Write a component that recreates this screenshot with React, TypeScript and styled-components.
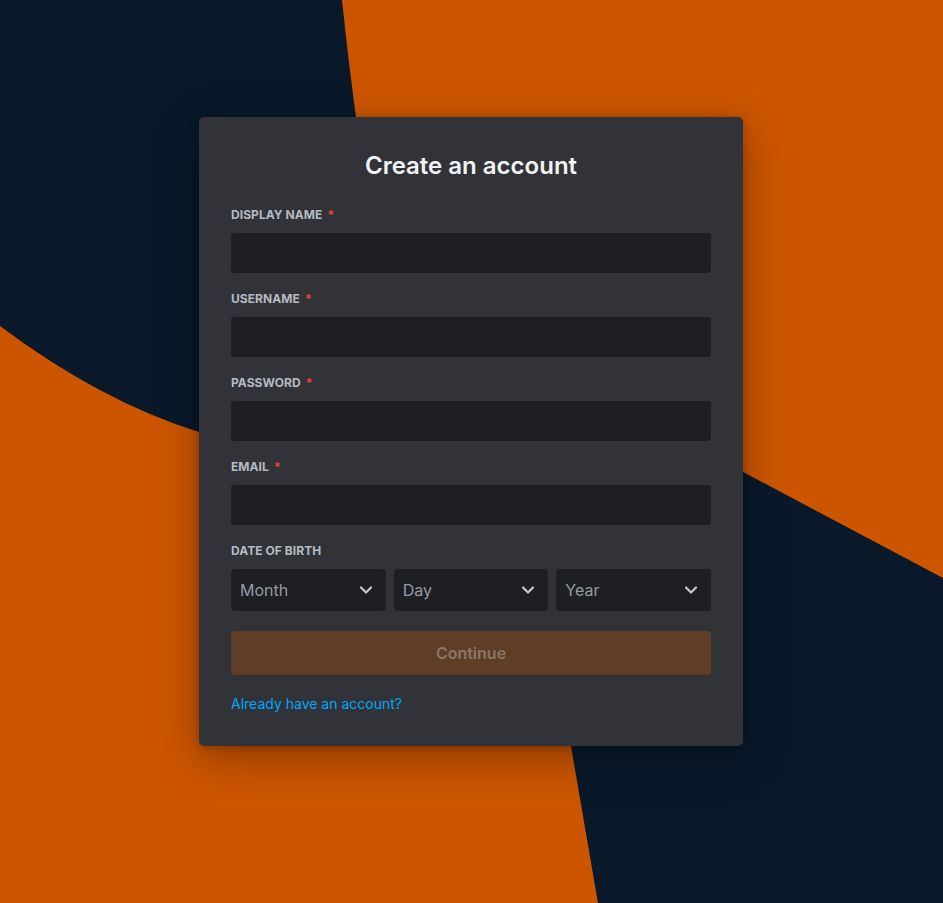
import React from "react";
import styled, { createGlobalStyle } from "styled-components";
import { ChevronDown } from "lucide-react";

const GlobalStyle = createGlobalStyle`
  html, body { margin: 0; padding: 0; }
  body {
    font-family: Inter, "Noto Sans", "Liberation Sans", sans-serif;
    background: #0a1a2a;
    -webkit-font-smoothing: antialiased;
  }
  * { box-sizing: border-box; }
`;

const Page = styled.main`
  position: relative;
  width: 100%;
  min-height: 903px;
  overflow: hidden;
  display: flex;
  justify-content: center;
  align-items: flex-start;
  padding: 117px 1px 0 0;
`;

const Backdrop = styled.svg`
  position: absolute;
  inset: 0;
  width: 100%;
  height: 100%;
  z-index: 0;
`;

const Card = styled.form`
  position: relative;
  z-index: 1;
  width: 544px;
  padding: 34px 32px 33px;
  background: #313338;
  border-radius: 5px;
  box-shadow: 0 2px 10px 0 rgba(0, 0, 0, 0.2), 0 12px 44px rgba(0, 0, 0, 0.3);
  display: flex;
  flex-direction: column;
`;

const Title = styled.h1`
  margin: 0 0 26px;
  font-size: 24px;
  line-height: 30px;
  font-weight: 600;
  color: #f2f3f5;
  text-align: center;
`;

const Field = styled.div`
  display: flex;
  flex-direction: column;
  margin-bottom: 18px;
`;

const Label = styled.label`
  display: block;
  margin-bottom: 10px;
  font-size: 12px;
  line-height: 16px;
  font-weight: 700;
  letter-spacing: 0.005em;
  text-transform: uppercase;
  color: #b5bac1;
`;

const Required = styled.span`
  color: #f23f42;
  padding-left: 5px;
`;

const TextInput = styled.input`
  height: 40px;
  width: 100%;
  border: none;
  outline: none;
  border-radius: 3px;
  background: #1e1f22;
  padding: 10px;
  font-size: 16px;
  color: #dbdee1;
  font-family: inherit;
`;

const DateRow = styled.div`
  display: grid;
  grid-template-columns: repeat(3, 1fr);
  gap: 8px;
`;

const Select = styled.div`
  height: 42px;
  border-radius: 4px;
  background: #1e1f22;
  display: flex;
  align-items: center;
  justify-content: space-between;
  padding: 0 10px 0 9px;
  font-size: 16px;
  color: #949ba4;
`;

const Chevron = styled(ChevronDown)`
  color: #c4c9ce;
  margin-top: -1px;
`;

const Button = styled.button`
  margin-top: 20px;
  height: 44px;
  width: 100%;
  border: none;
  border-radius: 4px;
  background: #5f3d27;
  color: #8b7566;
  font-family: inherit;
  font-size: 16px;
  font-weight: 600;
  cursor: not-allowed;
`;

const LoginLink = styled.a`
  margin-top: 20px;
  align-self: flex-start;
  font-size: 14px;
  line-height: 18px;
  color: #00a8fc;
  text-decoration: none;
  cursor: pointer;
`;

const fields = [
  { label: "Display Name", type: "text" },
  { label: "Username", type: "text" },
  { label: "Password", type: "password" },
  { label: "Email", type: "email" },
];

const dateParts = ["Month", "Day", "Year"];

export default function App() {
  return (
    <>
      <GlobalStyle />
      <Page>
        <Backdrop viewBox="0 0 943 903" preserveAspectRatio="none" aria-hidden="true">
          <rect x="0" y="0" width="943" height="903" fill="#09192a" />
          <path d="M342 0 Q348 58 357 125 L743 472 L943 578 L943 0 Z" fill="#cc5500" />
          <path d="M0 326 Q100 401 199 432 L571 746 Q584 822 598 903 L0 903 Z" fill="#cc5500" />
        </Backdrop>
        <Card onSubmit={(e) => e.preventDefault()}>
          <Title>Create an account</Title>
          {fields.map((f) => (
            <Field key={f.label}>
              <Label>
                {f.label}
                <Required>*</Required>
              </Label>
              <TextInput type={f.type} />
            </Field>
          ))}
          <div>
            <Label>Date of birth</Label>
            <DateRow>
              {dateParts.map((p) => (
                <Select key={p}>
                  <span>{p}</span>
                  <Chevron size={20} strokeWidth={2.6} />
                </Select>
              ))}
            </DateRow>
          </div>
          <Button type="submit" disabled>
            Continue
          </Button>
          <LoginLink>Already have an account?</LoginLink>
        </Card>
      </Page>
    </>
  );
}
